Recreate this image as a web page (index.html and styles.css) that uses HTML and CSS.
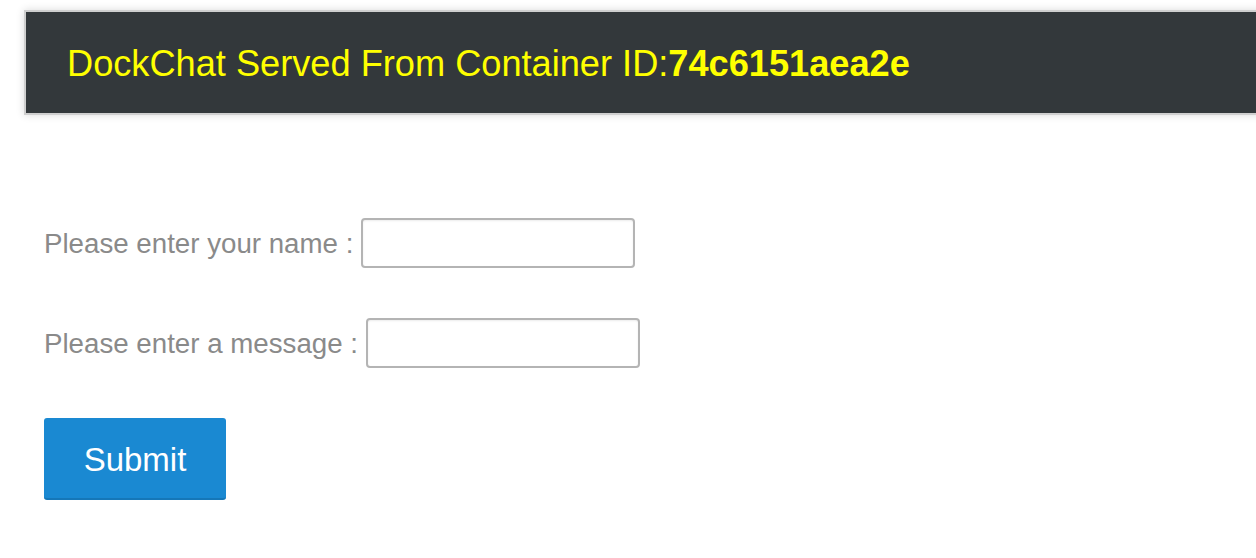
FILE: index.html
```html
<!DOCTYPE html>
<html>
<head>
<meta charset="utf-8">
<link rel="stylesheet" href="styles.css">
</head>
<body>
<header class="banner">
  <h1 class="banner-title">DockChat Served From Container ID:<b class="banner-id">74c6151aea2e</b></h1>
</header>
<form class="chat-form">
  <div class="row">
    <label class="label" for="name">Please enter your name :</label>
    <input class="field" id="name" type="text">
  </div>
  <div class="row">
    <label class="label" for="msg">Please enter a message :</label>
    <input class="field" id="msg" type="text">
  </div>
  <div class="actions">
    <button class="submit" type="button">Submit</button>
  </div>
</form>
</body>
</html>
```
FILE: styles.css
```css
html, body {
  margin: 0;
  padding: 0;
  background: #ffffff;
  font-family: "Liberation Sans", Arial, Helvetica, sans-serif;
  overflow: hidden;
}
.banner {
  margin: 10px -30px 0 24px;
  height: 101px;
  background: #33383b;
  border: 2px solid #cfcfcf;
  box-shadow: 0 0 8px rgba(0,0,0,0.15);
  display: flex;
  align-items: center;
  padding-left: 41px;
}
.banner-title {
  margin: 0;
  font-size: 36.2px;
  line-height: 1;
  font-weight: normal;
  color: #ffff00;
  padding-top: 3px;
}
.banner-id {
  font-weight: bold;
}
.chat-form {
  margin: 103px 0 0 44px;
  display: flex;
  flex-direction: column;
  gap: 50px;
}
.row {
  display: flex;
  align-items: center;
  gap: 8px;
  height: 50px;
}
.label {
  font-size: 27.7px;
  color: #8a8a8a;
  padding-top: 1px;
}
.field {
  box-sizing: border-box;
  width: 274px;
  height: 50px;
  border: 2px solid #b4b4b4;
  border-radius: 4px;
  margin: 0;
  padding: 4px;
  font-size: 20px;
  box-shadow: inset 0 1px 2px rgba(0,0,0,0.08);
}
.actions {
  display: flex;
}
.submit {
  width: 182px;
  height: 82px;
  background: #1a89d2;
  color: #fff;
  border: none;
  border-bottom: 2px solid #1577b8;
  border-radius: 3px;
  font-family: "Liberation Sans", Arial, Helvetica, sans-serif;
  font-size: 33px;
  padding: 4px 0 0;
}
```
